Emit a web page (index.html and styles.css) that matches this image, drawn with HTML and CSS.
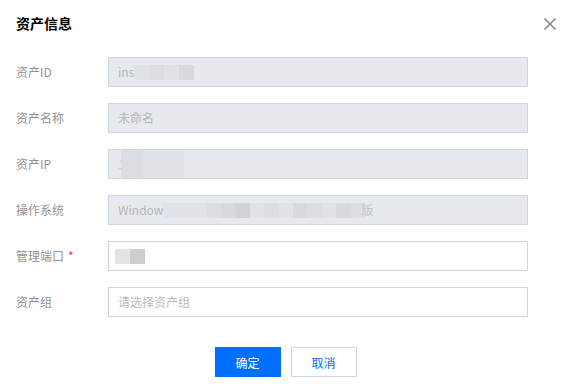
FILE: index.html
```html
<!DOCTYPE html>
<html lang="zh-CN">
  <head>
    <meta charset="UTF-8" />
    <title>资产信息</title>
    <link rel="stylesheet" href="styles.css">
  </head>
  <body>
    <div class="dialog">
      <div class="dialog-header">
        <h3 class="dialog-title">资产信息</h3>
        <button class="dialog-close" aria-label="关闭">
          <svg width="14" height="14" viewBox="0 0 14 14">
            <path d="M1.5 1.5 L12.5 12.5 M12.5 1.5 L1.5 12.5" stroke="#888" stroke-width="1.6" fill="none" />
          </svg>
        </button>
      </div>

      <div class="form">
        <div class="form-row">
          <label class="form-label">资产ID</label>
          <div class="field disabled">
            <span>ins</span>
            <span class="mosaic m-id">
              <i class="c1"></i><i class="c2"></i><i class="c1"></i><i class="c3"></i>
            </span>
          </div>
        </div>

        <div class="form-row">
          <label class="form-label">资产名称</label>
          <div class="field disabled">未命名</div>
        </div>

        <div class="form-row">
          <label class="form-label">资产IP</label>
          <div class="field disabled">
            <span class="faint">1</span>
            <span class="mosaic m-ip">
              <i class="c2"></i><i class="c1"></i><i class="c1"></i><i class="c2"></i><i class="c1"></i><i class="c1"></i>
            </span>
          </div>
        </div>

        <div class="form-row">
          <label class="form-label">操作系统</label>
          <div class="field disabled">
            <span>Window</span>
            <span class="mosaic m-os">
              <i class="c1"></i><i class="c1"></i><i class="c1"></i><i class="c2"></i><i class="c3"></i><i class="c4"></i><i class="c1"></i><i class="c2"></i><i class="c1"></i><i class="c3"></i><i class="c2"></i><i class="c1"></i><i class="c3"></i><i class="c2"></i>
            </span>
            <span class="tail">版</span>
          </div>
        </div>

        <div class="form-row">
          <label class="form-label">管理端口<em class="required">*</em></label>
          <div class="field">
            <span class="mosaic m-port">
              <i class="g1"></i><i class="g2"></i>
            </span>
          </div>
        </div>

        <div class="form-row">
          <label class="form-label">资产组</label>
          <div class="field placeholder">请选择资产组</div>
        </div>
      </div>

      <div class="dialog-footer">
        <button class="btn btn-primary">确定</button>
        <button class="btn">取消</button>
      </div>
    </div>
  </body>
</html>
```

FILE: styles.css
```css
* {
  margin: 0;
  padding: 0;
  box-sizing: border-box;
}

body {
  width: 571px;
  height: 388px;
  background: #fff;
  font-family: "Noto Sans CJK SC", "Liberation Sans", sans-serif;
  font-size: 12px;
  color: #000;
}

.dialog {
  padding: 12px 43px 0 16px;
}

.dialog-header {
  display: flex;
  justify-content: space-between;
  align-items: center;
  height: 22px;
}

.dialog-title {
  font-size: 14px;
  font-weight: bold;
  line-height: 22px;
  color: #000;
}

.dialog-close {
  border: none;
  background: none;
  width: 14px;
  height: 14px;
  margin-right: -29px;
  margin-top: 2px;
  cursor: pointer;
}

.dialog-close svg {
  display: block;
}

.form {
  display: flex;
  flex-direction: column;
  gap: 16px;
  margin-top: 23px;
}

.form-row {
  display: flex;
  align-items: center;
  height: 30px;
}

.form-label {
  width: 92px;
  color: #939393;
  line-height: 18px;
}

.required {
  font-style: normal;
  color: #e54545;
  margin-left: 4px;
}

.field {
  flex: 1;
  height: 30px;
  display: flex;
  align-items: center;
  padding: 0 9px;
  border: 1px solid #cfd5de;
  background: #fff;
  color: #444;
  line-height: 18px;
}

.field.disabled {
  background: #e6e9ee;
  color: #b3b5b9;
}

.field.placeholder {
  color: #bbb;
}

.faint {
  color: #c9ccd1;
  margin-right: -4px;
}

.tail {
  color: #c2c5ca;
  margin-left: -4px;
}

.mosaic {
  display: flex;
  flex-wrap: wrap;
}

.mosaic i {
  display: block;
  width: 15px;
  height: 15px;
}

.m-id {
  width: 60px;
}

.m-ip {
  width: 63px;
  height: 28px;
}

.m-ip i {
  width: 21px;
  height: 14px;
}

.m-os {
  width: 202px;
}

.m-os i {
  width: 14.4px;
}

.m-port {
  margin-left: -3px;
}

.c1 { background: #dfe2e7; }
.c2 { background: #dadde2; }
.c3 { background: #d6d9de; }
.c4 { background: #d0d3d8; }
.g1 { background: #e3e3e3; }
.g2 { background: #cdcdcd; }

.dialog-footer {
  display: flex;
  justify-content: center;
  gap: 10px;
  margin-top: 30px;
  margin-right: -43px;
  margin-left: -16px;
}

.btn {
  width: 66px;
  height: 30px;
  border: 1px solid #cfd5de;
  background: #fff;
  color: #006eff;
  font-family: inherit;
  font-size: 12px;
  cursor: pointer;
}

.btn-primary {
  background: #006eff;
  border-color: #006eff;
  color: #fff;
}
```
